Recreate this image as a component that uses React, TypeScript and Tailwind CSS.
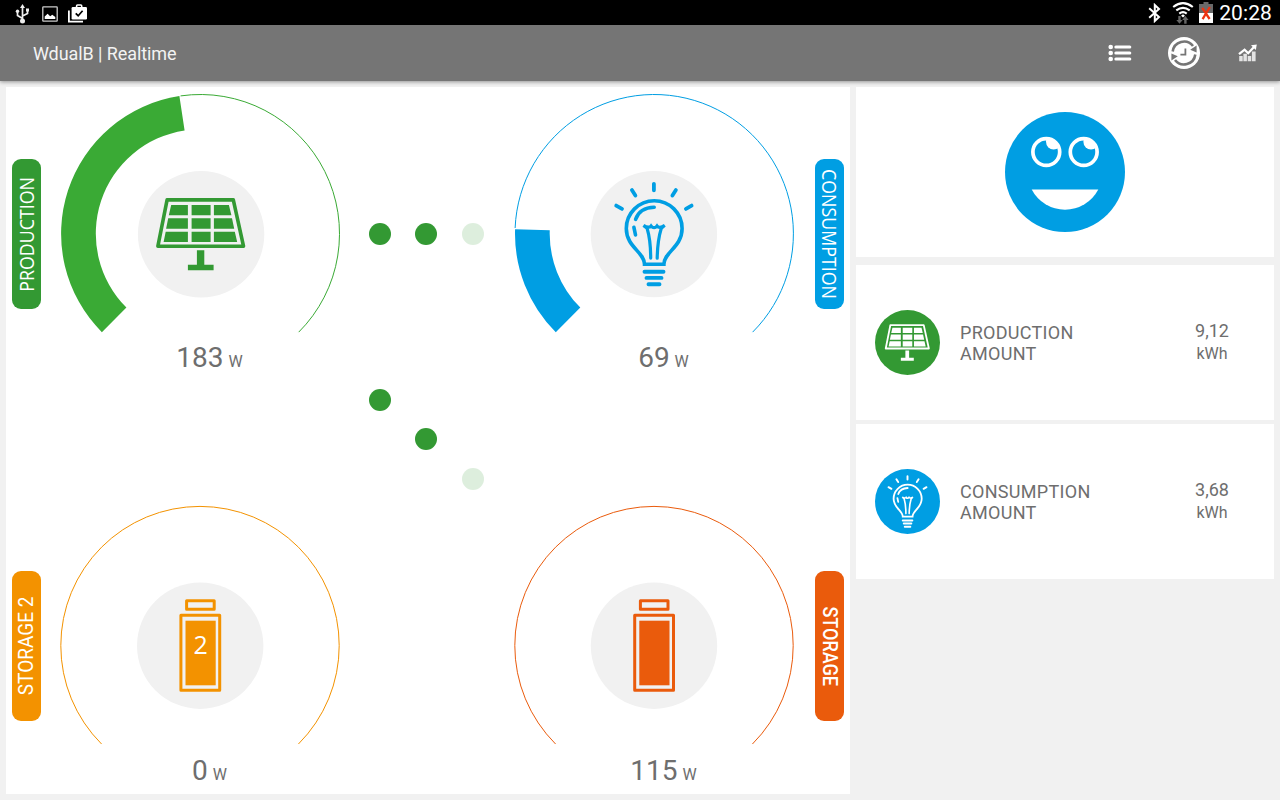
import React from 'react';

type IconName = 'solar' | 'bulb' | 'battery' | 'battery2';

interface GaugeProps {
  value: number;
  color: string;
  iconColor: string;
  icon: IconName;
  // share of the 270 degree scale that is filled
  level: number;
  dial: string;
  hub: string;
  valueClassName: string;
}

interface TagProps {
  label: string;
  className: string;
  textClassName: string;
}

const RADIUS = 139.2;
const INNER_RADIUS = 104.5;

const point = (radius: number, degrees: number) => {
  const rad = (degrees * Math.PI) / 180;
  return `${(radius * Math.cos(rad)).toFixed(2)} ${(radius * Math.sin(rad)).toFixed(2)}`;
};

const SolarGlyph: React.FC<{ color: string }> = ({ color }) => (
  <g fill={color}>
    <path
      d="M-34 -34.4H32.2L42.4 11.9H-43.2Z"
      fill="none"
      stroke={color}
      strokeWidth="3.6"
      strokeLinejoin="round"
    />
    <path d="M-29.9 -29.3H-13.2V-19H-32.3ZM-9.5 -29.3H9.5V-19H-9.5ZM12.8 -29.3H27.8L30.3 -19H12.8Z" />
    <path d="M-32.9 -16H-13.2V-5.6H-35ZM-9.5 -16H9.5V-5.6H-9.5ZM12.8 -16H30.9L33.1 -5.6H12.8Z" />
    <path d="M-35.4 -2.6H-13.2V7.7H-37.5ZM-9.5 -2.6H9.5V7.7H-9.5ZM12.8 -2.6H33.7L36.1 7.7H12.8Z" />
    <path d="M-4.2 16H3.2V30.5H12.5V36H-13.2V30.5H-4.2Z" />
  </g>
);

const BulbGlyph: React.FC<{ color: string }> = ({ color }) => (
  <g fill="none" stroke={color} strokeWidth="3" strokeLinecap="round">
    <path d="M-9.4 30.2C-9.4 18 -27.6 13 -27.6 -5.5A27.9 27.9 0 0 1 28.2 -5.5C28.2 13 10 18 10 30.2Z" strokeWidth="3.6" />
    <path d="M-18.3 -14.8C-15.5 -22.5 -8.5 -26.6 .3 -26.8" strokeWidth="3.6" />
    <path d="M-20 -6.8L-18.4 .8" strokeWidth="3.6" />
    <path d="M-3.2 24C-3.2 12 -4.5 2 -6.8 -5.8L-10.4 -8.7C-8 -7.2 -4.5 -6 -2.8 -8.2Q.2 -4.6 3.1 -8.2C4.8 -6 8.4 -7.2 10.8 -8.7L7.4 -5.8C5 2 3.5 12 3.3 24" strokeWidth="3.2" />
    <path d="M0 -50.3V-43.8M-22 -44L-18.5 -38.5M22 -44L18.5 -38.5M-37.7 -28.5L-31.9 -25.2M37.7 -28.5L32 -25.2" strokeWidth="3.8" />
    <path d="M-9.4 37.6H9.6M-7.4 43.8H7.6M-5.4 50.2H5.6" strokeWidth="3.9" />
  </g>
);

const BatteryGlyph: React.FC<{ color: string; label?: string }> = ({ color, label }) => (
  <g>
    <g fill="none" stroke={color} strokeWidth="3" strokeLinejoin="round">
      <rect x="-13.6" y="-45" width="27.6" height="8.6" />
      <rect x="-19.3" y="-30.4" width="38.8" height="75" />
    </g>
    <rect x="-14.7" y="-25" width="30.2" height="64.6" fill={color} />
    {label && (
      <text x=".4" y="8.2" textAnchor="middle" fontSize="25" fontFamily="'Open Sans', sans-serif" fill="#fff">
        {label}
      </text>
    )}
  </g>
);

const Glyph: React.FC<{ name: IconName; color: string }> = ({ name, color }) => {
  if (name === 'solar') return <SolarGlyph color={color} />;
  if (name === 'bulb') return <BulbGlyph color={color} />;
  return <BatteryGlyph color={color} label={name === 'battery2' ? '2' : undefined} />;
};

const Gauge: React.FC<GaugeProps> = ({ value, color, iconColor, icon, level, dial, hub, valueClassName }) => {
  const start = 135;
  const split = start + level * 270;
  const rest = level > 0 ? split + 0.5 : start;

  return (
    <div className="w-[281px]">
      <svg width="281" height="241" viewBox="-140.4 -140.4 281 241" className="block">
        <g transform={dial}>
          <path
            d={`M${point(RADIUS, rest)}A${RADIUS} ${RADIUS} 0 ${405 - rest > 180 ? 1 : 0} 1 ${point(RADIUS, 45)}`}
            fill="none"
            stroke={color}
            strokeWidth="1"
          />
          {level > 0 && (
            <path
              d={`M${point(RADIUS, start)}A${RADIUS} ${RADIUS} 0 0 1 ${point(RADIUS, split)}L${point(INNER_RADIUS, split)}A${INNER_RADIUS} ${INNER_RADIUS} 0 0 0 ${point(INNER_RADIUS, start)}Z`}
              fill={color}
            />
          )}
        </g>
        <g transform={hub}>
          <circle r="63.2" fill="#f1f1f1" />
          <Glyph name={icon} color={iconColor} />
        </g>
      </svg>
      <p className={`pl-[18px] text-center text-[28px] leading-[33px] text-[#6e6e6e] ${valueClassName}`}>
        {value} <span className="-ml-0.5 text-base">W</span>
      </p>
    </div>
  );
};

const Tag: React.FC<TagProps> = ({ label, className, textClassName }) => (
  <div className={`mt-[66px] flex h-[150px] w-[29px] items-center justify-center rounded-[9px] text-white ${className}`}>
    <span className={`whitespace-nowrap text-[20px] leading-[29px] [writing-mode:vertical-rl] ${textClassName}`}>
      {label}
    </span>
  </div>
);

const Dot: React.FC<{ className?: string }> = ({ className = '' }) => (
  <div className={`size-[22px] rounded-full bg-[#339933] ${className}`} />
);

const StatusBar = () => (
  <div className="flex h-[25px] items-center justify-between bg-black pl-[15px] pr-2 text-white">
    <div className="flex items-center">
      {/* USB */}
      <svg width="15" height="20" viewBox="0 0 15 20" className="mt-[3px]">
        <path d="M7.5 17V3M7.5 14.5L2.5 11.5V8M7.5 12L12.5 9.5V6.5" fill="none" stroke="#eee" strokeWidth="1.7" />
        <path d="M7.5 0L10 4H5ZM11 4.5h3v3h-3Z" fill="#eee" />
        <circle cx="2.5" cy="7.3" r="1.7" fill="#eee" />
        <circle cx="7.5" cy="17" r="2.5" fill="#eee" />
      </svg>
      <svg width="16" height="16" viewBox="0 0 16 16" className="ml-3 mt-[3px]">
        <rect x=".8" y=".8" width="14.4" height="14.4" rx=".6" fill="none" stroke="#ccc" strokeWidth="1.3" />
        <path d="M2.7 13V10.6L5.6 7.8L8.2 10.2L10.3 8.8L13.3 11V13Z" fill="#fff" />
      </svg>
      <svg width="20" height="19" viewBox="0 0 20 19" className="ml-[10px] mt-0.5">
        <path d="M.9 6.5V17.7H15" fill="none" stroke="#fff" strokeWidth="1.8" />
        <path d="M8.6 3.5V1.9Q8.6 1 9.5 1H12.8Q13.7 1 13.7 1.9V3.5" fill="none" stroke="#fff" strokeWidth="1.6" />
        <rect x="3.6" y="3" width="15.4" height="12.5" rx="1.2" fill="#fff" />
        <path d="M7.7 9.3L10.2 11.7L14.6 6.8" fill="none" stroke="#000" strokeWidth="1.7" />
      </svg>
    </div>
    <div className="flex items-center">
      {/* Bluetooth */}
      <svg width="13" height="20" viewBox="0 0 13 20" className="mt-px">
        <path d="M1.2 5.3L11 14L6.8 18V2L11 6L1.2 14.7" fill="none" stroke="#fff" strokeWidth="2" />
      </svg>
      <svg width="22" height="23" viewBox="0 0 22 23" className="ml-[11px] mt-px">
        <g fill="none" stroke="#fff" strokeWidth="2.1">
          <path d="M1.2 5Q11 -2.6 20.8 5" />
          <path d="M4.3 8.4Q11 3.2 17.7 8.4" />
          <path d="M7.3 11.6Q11 8.8 14.7 11.6" />
        </g>
        <path d="M11 12.2L13 13.8L11 15.5L9 13.8Z" fill="#fff" />
        <path d="M6.3 22H8.7V18H10.7L7.5 14.2L4.3 18H6.3Z" fill="#666" transform="rotate(180 7.5 18)" />
        <path d="M12.2 21.8H14.6V18H16.6L13.4 14L10.2 18H12.2Z" fill="#666" />
      </svg>
      {/* Battery */}
      <svg width="14" height="21" viewBox="0 0 14 21" className="ml-[5px]">
        <path d="M4.5 0H9.5V2H14V11H0V2H4.5Z" fill="#6a6a6a" />
        <path d="M0 11H14V21H0Z" fill="#fff" />
        <path d="M3.2 5.8L10.6 17M10.8 5L3.6 17.2" stroke="#ee3311" strokeWidth="2.3" />
      </svg>
      <span className="ml-1.5 mt-0.5 text-[21px] leading-[25px] tracking-[0.1px]">20:28</span>
    </div>
  </div>
);

const ActionBar = () => (
  <header className="relative z-10 flex h-14 items-center justify-between bg-[#757575] pl-[33px] pr-[22px] shadow-[0_1px_4px_rgba(0,0,0,0.4)]">
    <h1 className="text-[18px] tracking-[-0.08px] text-[#f3f3f3]">WdualB | Realtime</h1>
    <div className="flex items-center">
      <svg width="24" height="18" viewBox="0 0 24 18">
        <g fill="#fff">
          <circle cx="2.7" cy="3" r="2.3" />
          <circle cx="2.7" cy="9" r="2.3" />
          <circle cx="2.7" cy="15" r="2.3" />
          <rect x="6.3" y="1.4" width="17" height="3.2" rx="1.5" />
          <rect x="6.3" y="7.4" width="17" height="3.2" rx="1.5" />
          <rect x="6.3" y="13.4" width="17" height="3.2" rx="1.5" />
        </g>
      </svg>
      <svg width="32" height="32" viewBox="-16 -16 32 32" className="ml-9">
        <circle r="16" fill="#fff" />
        <g fill="none" stroke="#757575" strokeWidth="2.6">
          <path d="M-11.3 -1.5A11.4 11.4 0 0 1 9 -7" />
          <path d="M11.3 1.5A11.4 11.4 0 0 1 -9 7" />
        </g>
        <path d="M12.6 -7.4V-.6L6.2 -3.2ZM-12.6 7.4V.6L-6.2 3.2Z" fill="#757575" />
        <path d="M1.4 -4.6V1.7H-3.6" fill="none" stroke="#757575" strokeWidth="1.8" />
      </svg>
      <svg width="20" height="18" viewBox="0 0 20 18" className="ml-[38px]">
        <path
          d="M1.2 12H4.7V17.3H1.2ZM5.4 9.8H8.9V17.3H5.4ZM9.7 12H13.2V17.3H9.7ZM13.9 7.5H17.6V17.3H13.9Z"
          fill="#e4e4e4"
        />
        <path d="M1 10.2L6.6 5.7L10.2 9.2L16 3" fill="none" stroke="#fff" strokeWidth="2.3" />
        <path d="M13 1.2L18.8 .4L17.8 6Z" fill="#fff" />
      </svg>
    </div>
  </header>
);

const eyes = [-18.7, 18.7];

const Smiley = () => (
  <svg width="120" height="120" viewBox="-60 -60 120 120">
    <defs>
      <clipPath id="eye">
        <circle r="14" />
      </clipPath>
    </defs>
    <circle r="60" fill="#009ee3" />
    {eyes.map((x) => (
      <g key={x} transform={`translate(${x} -20)`}>
        <circle r="13.4" fill="none" stroke="#fff" strokeWidth="3.7" />
        <circle cx="7.3" cy="-10.2" r="7.6" fill="#fff" clipPath="url(#eye)" />
      </g>
    ))}
    <path d="M-33.3 17.5H33.3A37.6 37.6 0 0 1 -33.3 17.5Z" fill="#fff" />
  </svg>
);

const amounts: { icon: IconName; color: string; label: string; value: string }[] = [
  { icon: 'solar', color: '#339933', label: 'PRODUCTION', value: '9,12' },
  { icon: 'bulb', color: '#009ee3', label: 'CONSUMPTION', value: '3,68' },
];

const App: React.FC = () => (
  <div className="flex h-screen w-full flex-col overflow-hidden bg-[#f1f1f1] font-[Roboto,sans-serif]">
    <StatusBar />
    <ActionBar />

    <main className="flex flex-1 gap-1.5 px-1.5 pb-1.5 pt-1.5">
      {/* Energy flow */}
      <section className="flex w-[844px] bg-white px-1.5 pt-[6px]">
        <div className="flex flex-col">
          <div className="flex h-[412px] gap-[19px]">
            <Tag
              label="PRODUCTION"
              className="bg-[#339933]"
              textClassName="rotate-180 scale-y-[0.89] font-['Open_Sans',sans-serif]"
            />
            <Gauge
              value={183}
              color="#3aaa35"
              iconColor="#339933"
              icon="solar"
              level={0.468}
              dial="translate(-.1 .3)"
              hub="translate(.7 .9)"
              valueClassName="mt-[7px]"
            />
          </div>
          <div className="flex gap-[19px]">
            <Tag label="STORAGE 2" className="bg-[#f39200]" textClassName="rotate-180 scale-y-[0.95]" />
            <Gauge
              value={0}
              color="#f39200"
              iconColor="#f39200"
              icon="battery2"
              level={0}
              dial="translate(-.4 .2)"
              hub="translate(-.2 .3)"
              valueClassName="mt-2"
            />
          </div>
        </div>

        <div className="ml-7 flex w-[115px] flex-col pt-[130px]">
          <div className="flex justify-between">
            <Dot />
            <Dot className="-ml-px" />
            <Dot className="opacity-[0.17]" />
          </div>
          <div className="mt-36 flex h-[101px] flex-col justify-between">
            <Dot />
            <Dot className="-mt-px ml-[46px]" />
            <Dot className="self-end opacity-[0.17]" />
          </div>
        </div>

        <div className="ml-[30px] flex flex-col">
          <div className="flex h-[412px] gap-5">
            <Gauge
              value={69}
              color="#009ee3"
              iconColor="#009ee3"
              icon="bulb"
              level={0.1735}
              dial="translate(-.2 .3)"
              hub="translate(-.5 .7)"
              valueClassName="mt-[7px]"
            />
            <Tag
              label="CONSUMPTION"
              className="bg-[#009ee3]"
              textClassName="scale-y-[0.89] font-['Open_Sans',sans-serif]"
            />
          </div>
          <div className="flex gap-5">
            <Gauge
              value={115}
              color="#ea5b0c"
              iconColor="#ea5b0c"
              icon="battery"
              level={0}
              dial="translate(-.4 .2)"
              hub="translate(-.4 .3)"
              valueClassName="mt-2"
            />
            <Tag label="STORAGE" className="bg-[#ea5b0c]" textClassName="scale-y-[0.9] font-medium" />
          </div>
        </div>
      </section>

      {/* Daily totals */}
      <aside className="flex w-[418px] flex-col">
        <div className="flex h-[170px] items-center justify-center bg-white">
          <Smiley />
        </div>
        <div className="mt-2 flex flex-col gap-1">
          {amounts.map(({ icon, color, label, value }) => (
            <div key={label} className="flex h-[155px] items-center bg-white pl-[19px] pr-[27px] text-[18px] leading-[21px] text-[#6e6e6e]">
              <svg width="65" height="65" viewBox="-64.5 -64.5 129 129">
                <circle r="64.5" fill={color} />
                <Glyph name={icon} color="#fff" />
              </svg>
              <p className="ml-5 w-[180px] tracking-[0.3px]">
                {label}
                <br />
                AMOUNT
              </p>
              <div className="-mt-0.5 ml-auto w-[70px] text-center">
                <p>{value}</p>
                <p className="mt-0.5 text-base leading-[21px]">kWh</p>
              </div>
            </div>
          ))}
        </div>
      </aside>
    </main>
  </div>
);

export default App;
